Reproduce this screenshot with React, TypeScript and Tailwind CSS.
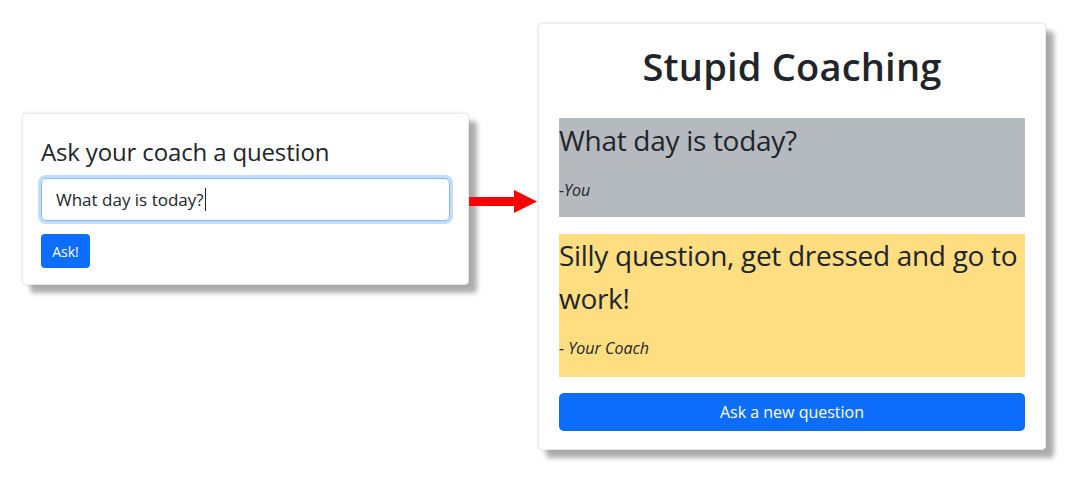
import React from 'react';

const font = { fontFamily: '"Open Sans", "Noto Sans", sans-serif' };

const Arrow = () => (
  <svg width="68" height="23" viewBox="0 0 68 23" className="mt-[167px] shrink-0">
    <rect x="0" y="7" width="46" height="9" fill="#ff0000" />
    <polygon points="45,0 68,11.5 45,23" fill="#ff0000" />
  </svg>
);

export default function App() {
  return (
    <div
      className="w-[1076px] h-[484px] bg-white flex items-start pl-[22px] pt-[23px] text-[#212529]"
      style={font}
    >
      {/* question form */}
      <div className="mt-[90px] w-[447px] h-[172px] shrink-0 bg-white rounded-[4px] border border-[#ececec] shadow-[8px_8px_5px_rgba(0,0,0,0.32),0_0_3px_rgba(0,0,0,0.12)] px-[18px] pt-[22px]">
        <div className="text-[24px] leading-[32px] tracking-[-0.15px]">Ask your coach a question</div>
        <div className="mt-[10px] h-[43px] rounded-[5px] border border-[#86b7fe] ring-[3px] ring-[#0d6efd]/25 flex items-center pl-[14px] text-[17px]">
          What day is today?<span className="inline-block w-px h-[23px] bg-[#212529] ml-px" />
        </div>
        <button className="mt-[13px] h-[34px] w-[49px] rounded-[4px] bg-[#0d6efd] text-white text-[14px]">
          Ask!
        </button>
      </div>

      <Arrow />

      {/* answer card */}
      <div className="ml-px w-[508px] h-[427px] shrink-0 bg-white rounded-[4px] border border-[#ececec] shadow-[8px_8px_5px_rgba(0,0,0,0.32),0_0_3px_rgba(0,0,0,0.12)] px-[20px] pt-[20px]">
        <h1 className="text-[38px] leading-[44px] font-semibold text-center tracking-[0.2px]">Stupid Coaching</h1>

        <div className="mt-[30px] h-[99px] bg-[#b5babe]">
          <div className="text-[28px] leading-[44px] tracking-[-0.3px]">What day is today?</div>
          <div className="mt-[16px] italic text-[16px] leading-[24px]">-You</div>
        </div>

        <div className="mt-[17px] h-[143px] bg-[#ffde82]">
          <div className="text-[28px] leading-[43px] tracking-[-0.3px]">
            Silly question, get dressed and go to work!
          </div>
          <div className="mt-[16px] italic text-[16px] leading-[24px]">- Your Coach</div>
        </div>

        <button className="mt-[16px] w-full h-[38px] rounded-[5px] bg-[#0d6efd] text-white text-[16px]">
          Ask a new question
        </button>
      </div>
    </div>
  );
}
